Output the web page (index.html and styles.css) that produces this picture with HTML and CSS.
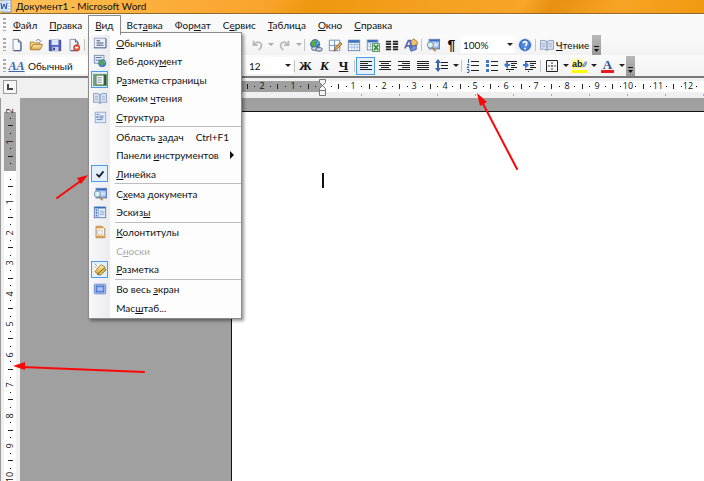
FILE: index.html
```html
<!DOCTYPE html>
<html lang="ru">
<head>
<meta charset="utf-8">
<title>Документ1 - Microsoft Word</title>
<link rel="stylesheet" href="styles.css">
</head>
<body>
<svg class="defs" aria-hidden="true">
  <defs>
    <linearGradient id="blue" x1="0" y1="0" x2="1" y2="1"><stop offset="0" stop-color="#e4efff"/><stop offset="1" stop-color="#7c9fe0"/></linearGradient>
    <linearGradient id="gold" x1="0" y1="0" x2="0" y2="1"><stop offset="0" stop-color="#fff0b0"/><stop offset="1" stop-color="#dda23c"/></linearGradient>
    <symbol id="page" viewBox="0 0 16 16"><path d="M3.500 1.500h6l3 3v10h-9z" fill="#f5f9ff" stroke="#7388aa"/><path d="M9.500 1.500v3h3M12.500 5v9.500h-8" fill="none" stroke="#33486f"/></symbol>
    <symbol id="doc" viewBox="0 0 16 16"><rect x="1.500" y="2.500" width="13" height="11" fill="#e9f0fb" stroke="#8d9dba"/><path d="M1 13.500h14V3" fill="none" stroke="#536b98"/><path d="M4 5.500h4M4 8h8M4 10.500h8" stroke="#36435f"/></symbol>
    <symbol id="mapdoc" viewBox="0 0 16 16"><rect x="3.500" y="1.500" width="12" height="11" fill="url(#blue)" stroke="#5777b5"/><path d="M4 3h11" stroke="#356ac0" stroke-width="2"/><path d="M9 7h5M9 9h5" stroke="#fff"/><circle cx="5" cy="8" r="3.500" fill="#d8f3fb" stroke="#698799"/><path d="M7 11l4 4" stroke="#ad8746" stroke-width="2"/></symbol>
    <symbol id="book" viewBox="0 0 16 16"><path d="M.500 3q4-1 7.500 1 3.500-2 7.500-1v10q-4-1-7.500 1-3.500-2-7.500-1z" fill="#dce6f4" stroke="#8496b4"/><path d="M8 4v10" stroke="#5b719a"/><path d="M2 6h4M2 8h4M2 10h4M10 6h4M10 8h4M10 10h4" stroke="#9fb1ce"/></symbol>
    <symbol id="globe" viewBox="0 0 16 16"><circle cx="8" cy="8" r="6" fill="#3f83d8" stroke="#345c90"/><path d="M4 4q4-3 6 0l-2 2 2 3-3 4q-4-3-4-8z" fill="#56ac48"/><path d="M10 3l3 4-2 1z" fill="#8ed272"/></symbol>
    <symbol id="grid" viewBox="0 0 16 16"><rect x="1.500" y="2.500" width="13" height="12" fill="#fff" stroke="#5c7eae"/><path d="M2 4h12" stroke="#3d70bc" stroke-width="3"/><path d="M2 7.500h12M2 10.500h12M5.500 5v9M8.500 5v9M11.500 5v9" stroke="#9db8dc"/></symbol>
    <symbol id="undo" viewBox="0 0 16 16"><path d="M4 3v5h5M5 7q4-4 7-1t-2 8" fill="none" stroke="#b5b8bd" stroke-width="2"/></symbol>
  </defs>
</svg>

<div class="window">
  <header class="titlebar">
    <svg class="logo" viewBox="0 0 12 13" aria-hidden="true"><path d="M2 0h9v12H2z" fill="#fff" stroke="#7191c3"/><path d="M5 3h5M5 6h5M5 9h5" stroke="#91a8d0"/><path d="M0 1h8v10H0z" fill="#d2e2fa"/><path d="M1 3l1 6 2-5 2 5 1-6" fill="none" stroke="#254c9c"/></svg>
    <span>Документ1 - Microsoft Word</span>
  </header>

  <nav class="menubar" aria-label="Меню">
    <span class="grip"></span>
    <button><u>Ф</u>айл</button>
    <button><u>П</u>равка</button>
    <div class="menu-holder">
      <button class="open" aria-expanded="true"><u>В</u>ид</button>
      <div class="dropdown" role="menu">
        <button role="menuitem"><i><svg><use href="#doc"/></svg></i><span><u>О</u>бычный</span></button>
        <button role="menuitem"><i><svg viewBox="0 0 16 16"><rect x="1.500" y="1.500" width="11" height="9" fill="#e9f0fb" stroke="#7188af"/><path d="M3 4h7M3 7h5" stroke="#43618f"/><use href="#globe" x="5" y="5" width="11" height="11"/></svg></i><span>Веб-доку<u>м</u>ент</span></button>
        <button role="menuitem"><i class="checked"><svg viewBox="0 0 16 16"><path d="M0 1h16v14H0z" fill="#71a777"/><path d="M12 2h3v12h-3z" fill="#2f4e35"/><path d="M3.500 2.500h9v11h-9z" fill="#fff" stroke="#55795a"/><path d="M5 5h5M5 7h5M5 9h5M5 11h5" stroke="#8695a8"/></svg></i><span>Р<u>а</u>зметка страницы</span></button>
        <button role="menuitem"><i><svg><use href="#book"/></svg></i><span>Режим <u>ч</u>тения</span></button>
        <button role="menuitem"><i><svg viewBox="0 0 16 16"><rect x="2.500" y="2.500" width="12" height="12" fill="#e3ecfc" stroke="#8ba3cd"/><path d="M4 5h3M7 7h5M7 9h5M4 11h7" stroke="#5978b1"/><path d="M4 7h2v2H4z" fill="#4b76c8"/></svg></i><span><u>С</u>труктура</span></button>
        <hr>
        <button role="menuitem"><i></i><span>Область <u>з</u>адач</span><kbd>Ctrl+F1</kbd></button>
        <button role="menuitem"><i></i><span>Панели <u>и</u>нструментов</span><b class="sub"></b></button>
        <button role="menuitem"><i class="checked"><svg viewBox="0 0 16 16"><path d="M4 8l3 3 5-6" fill="none" stroke="#111a2c" stroke-width="2"/></svg></i><span><u>Л</u>инейка</span></button>
        <hr>
        <button role="menuitem"><i><svg><use href="#mapdoc"/></svg></i><span>С<u>х</u>ема документа</span></button>
        <button role="menuitem"><i><svg viewBox="0 0 16 16"><rect x="1.500" y="2.500" width="13" height="12" fill="#edf3ff" stroke="#5777b5"/><path d="M2 3h12" stroke="#356ac0" stroke-width="2"/><path d="M3 6h2M3 9h2M3 12h2" stroke="#3c6ec5" stroke-width="2"/><path d="M6.500 4v10M8 7h5M8 9h5M8 11h5" stroke="#849fcb"/></svg></i><span>Эскиз<u>ы</u></span></button>
        <hr>
        <button role="menuitem"><i><svg viewBox="0 0 16 16"><path d="M3.500 1.500h7l3 3v10h-10z" fill="#fff8e8" stroke="#9c754a"/><path d="M4 3h7M4 13h9" stroke="#eba23c" stroke-width="2"/><path d="M5.500 6.500h5v4h-5z" fill="#fff" stroke="#b8c4d8"/></svg></i><span><u>К</u>олонтитулы</span></button>
        <button role="menuitem" disabled><i></i><span>С<u>н</u>оски</span></button>
        <button role="menuitem"><i class="checked"><svg viewBox="0 0 16 16"><path d="M1 3h7v10H1z" fill="#fffbe9"/><path d="M2 2l3 3M2 5l2 2" stroke="#8d8f96"/><path d="M2 11l7-8 5 3-8 8z" fill="url(#gold)" stroke="#9b7932"/><path d="M5 14l8-7 2 2-7 6z" fill="#e9c94e" stroke="#6a5623"/></svg></i><span><u>Р</u>азметка</span></button>
        <hr>
        <button role="menuitem"><i><svg viewBox="0 0 16 16"><rect x="1.500" y="2.500" width="13" height="11" rx="1" fill="#c8dcff" stroke="#5c7cc4"/><rect x="3.500" y="4.500" width="9" height="7" fill="#6f98ee" stroke="#3c62b8"/><path d="M5 7h6M5 9h6" stroke="#e1ecff"/></svg></i><span>Во весь <u>э</u>кран</span></button>
        <button role="menuitem"><i></i><span>Мас<u>ш</u>таб...</span></button>
      </div>
    </div>
    <button>Вст<u>а</u>вка</button>
    <button>Фор<u>м</u>ат</button>
    <button>С<u>е</u>рвис</button>
    <button><u>Т</u>аблица</button>
    <button><u>О</u>кно</button>
    <button><u>С</u>правка</button>
  </nav>

  <div class="toolbar" role="toolbar" aria-label="Стандартная">
    <div class="start">
      <span class="grip"></span>
      <button aria-label="Создать"><svg><use href="#page"/></svg></button>
      <button aria-label="Открыть"><svg viewBox="0 0 16 16"><path d="M1.500 13V4.500h4l1 1h6V8" fill="#f8d47b" stroke="#a17a35"/><path d="M1.500 13.500l3-6h11l-3 6z" fill="url(#gold)" stroke="#a17a35"/><path d="M8 3q4-3 5 1l1-1" fill="none" stroke="#64748f"/></svg></button>
      <button aria-label="Сохранить"><svg viewBox="0 0 16 16"><path d="M1.500 2.500h13v12h-13z" fill="#4e61c3" stroke="#333d92"/><path d="M4 2h8v6H4z" fill="#dce6fb"/><path d="M5 10h7v5H5z" fill="#cbd1e3"/><path d="M6 11h2v3H6z" fill="#293675"/></svg></button>
      <button aria-label="Разрешения"><svg viewBox="0 0 16 16"><use href="#page"/><circle cx="11" cy="11" r="4" fill="#d84d33"/><path d="M9 11h4" stroke="#fff" stroke-width="2"/></svg></button>
      <span class="sep"></span>
    </div>
    <button aria-label="Отменить"><svg><use href="#undo"/></svg></button>
    <button class="drop dim" aria-label="Список отмены"></button>
    <button aria-label="Вернуть"><svg class="flip"><use href="#undo"/></svg></button>
    <button class="drop dim" aria-label="Список возврата"></button>
    <span class="sep"></span>
    <button aria-label="Гиперссылка"><svg viewBox="0 0 16 16"><use href="#globe" x="0" y="0" width="14" height="14"/><rect x="3" y="10" width="7" height="4" rx="2" fill="#c9d5e5" stroke="#415873"/><rect x="8" y="11" width="7" height="4" rx="2" fill="#c9d5e5" stroke="#415873"/></svg></button>
    <button aria-label="Таблицы и границы"><svg viewBox="0 0 16 16"><path d="M1.500 2.500h12v12h-12zM7.500 3v11M2 8.500h11" fill="#f8fbff" stroke="#6785b9"/><path d="M7 15l1-4 6-6 2 2-6 6z" fill="#e4a74d" stroke="#805b2f"/></svg></button>
    <button aria-label="Добавить таблицу"><svg><use href="#grid"/></svg></button>
    <button aria-label="Таблица Excel"><svg viewBox="0 0 16 16"><use href="#grid" width="15" height="15"/><path d="M7.500 6.500h8v9h-8z" fill="#e9f6e7" stroke="#428442"/><path d="M9 8l5 6M14 8l-5 6" stroke="#2f8b35" stroke-width="2"/></svg></button>
    <button aria-label="Колонки"><svg viewBox="0 0 16 16"><path d="M1 4h6M1 7h6M1 10h6M1 13h6M9 4h6M9 7h6M9 10h6M9 13h6" stroke="#222" stroke-width="2"/></svg></button>
    <button aria-label="Рисование"><svg viewBox="0 0 16 16"><path d="M7 4l4-3 4 3v4l-4 3-4-3z" fill="#f2c56d" stroke="#9c742f"/><path d="M6 10l8-2v5l-6 2z" fill="#7d97df" stroke="#3c5096"/><path d="M1 12L5 3h2l2 9M3 9h5" fill="none" stroke="#5867b5" stroke-width="2"/></svg></button>
    <span class="sep"></span>
    <button aria-label="Схема документа"><svg><use href="#mapdoc"/></svg></button>
    <button class="pilcrow" aria-label="Непечатаемые знаки">¶</button>
    <label class="combo zoom"><select aria-label="Масштаб"><option>100%</option></select></label>
    <button aria-label="Справка"><svg viewBox="0 0 16 16"><circle cx="8" cy="8" r="7" fill="#4d86dc" stroke="#a7bce4"/><circle cx="8" cy="8" r="6" fill="none" stroke="#2c5db4"/><path d="M6 6q0-2 2-2t2 2-2 3M8 11v2" fill="none" stroke="#fff" stroke-width="2"/></svg></button>
    <span class="sep"></span>
    <button class="read"><svg><use href="#book"/></svg><span><u>Ч</u>тение</span></button>
    <button class="more" aria-label="Параметры панели"><svg viewBox="0 0 7 7"><path d="M1 1h5v1H1zM1 4h5L3.500 7z" fill="#111"/></svg></button>
  </div>

  <div class="toolbar" role="toolbar" aria-label="Форматирование">
    <div class="start">
      <span class="grip"></span>
      <button class="styles" aria-label="Стили">AA</button>
      <label class="combo style"><select aria-label="Стиль"><option>Обычный</option></select></label>
    </div>
    <label class="combo size"><select aria-label="Размер шрифта"><option>12</option></select></label>
    <span class="sep"></span>
    <button class="letter">Ж</button>
    <button class="letter italic">К</button>
    <button class="letter under">Ч</button>
    <span class="sep"></span>
    <button class="pressed" aria-label="По левому краю"><svg viewBox="0 0 14 14"><path d="M1 2.500h12M1 4.500h8M1 6.500h12M1 8.500h8M1 10.500h12" class="ink"/></svg></button>
    <button aria-label="По центру"><svg viewBox="0 0 14 14"><path d="M1 2.500h12M3 4.500h8M1 6.500h12M3 8.500h8M1 10.500h12" class="ink"/></svg></button>
    <button aria-label="По правому краю"><svg viewBox="0 0 14 14"><path d="M1 2.500h12M5 4.500h8M1 6.500h12M5 8.500h8M1 10.500h12" class="ink"/></svg></button>
    <button aria-label="По ширине"><svg viewBox="0 0 14 14"><path d="M1 2.500h12M1 4.500h12M1 6.500h12M1 8.500h12M1 10.500h12" class="ink"/></svg></button>
    <button aria-label="Интервал"><svg viewBox="0 0 14 14"><path d="M6 3.500h7M6 6.500h7M6 9.500h7" class="ink"/><path d="M3 0L6 4H0zM3 13L6 9H0zM2 4h2v5H2z" fill="#3565b5"/></svg></button>
    <button class="drop" aria-label="Выбор интервала"></button>
    <span class="sep"></span>
    <button aria-label="Нумерация"><svg viewBox="0 0 14 14"><path d="M5 2.500h8M5 6.500h8M5 11.500h8" class="ink"/><path d="M2.500 0v4M1 5.500h2v1L1 8.500h2M1 10.500h2v3H1" fill="none" stroke="#3565b5"/></svg></button>
    <button aria-label="Маркеры"><svg viewBox="0 0 14 14"><path d="M6 2.500h7M6 6.500h7M6 11.500h7" class="ink"/><path d="M1 1h3v3H1zM1 5h3v3H1zM1 10h3v3H1z" fill="#4474c6"/></svg></button>
    <button aria-label="Уменьшить отступ"><svg viewBox="0 0 14 14"><path d="M2 2.500h11M7 4.500h6M7 6.500h4M7 8.500h6M2 10.500h8M5 12.500h1" class="ink"/><path d="M0 6l4-4v3h2v2H4v3z" fill="#3f76cc"/></svg></button>
    <button aria-label="Увеличить отступ"><svg viewBox="0 0 14 14"><path d="M2 2.500h11M7 4.500h6M7 6.500h4M7 8.500h6M2 10.500h8M5 12.500h1" class="ink"/><path d="M6 6L2 2v3H0v2h2v3z" fill="#3f76cc"/></svg></button>
    <span class="sep"></span>
    <button aria-label="Границы"><svg viewBox="0 0 14 14"><path d="M1.500 1.500h11v11h-11z" fill="none" stroke="#222"/><path d="M7 3v8M3 7h8" stroke="#444" stroke-dasharray="2 1"/></svg></button>
    <button class="drop" aria-label="Выбор границы"></button>
    <button class="mark" aria-label="Выделение цветом"><span>ab</span><svg viewBox="0 0 16 16"><path d="M9 8l4-5 3 1-4 6-3 1z" fill="#9fb6da" stroke="#4c6186"/></svg></button>
    <button class="drop" aria-label="Цвет выделения"></button>
    <button class="color" aria-label="Цвет шрифта">A</button>
    <button class="drop" aria-label="Выбор цвета шрифта"></button>
    <button class="more" aria-label="Параметры панели"><svg viewBox="0 0 7 7"><path d="M1 1h5v1H1zM1 4h5L3.500 7z" fill="#111"/></svg></button>
  </div>

  <div class="hrule">
    <button class="tabstop" aria-label="Табуляция"><svg viewBox="0 0 12 12"><path d="M4 3v5h5" fill="none" stroke="#444" stroke-width="2"/></svg></button>
    <svg id="hruler" class="hruler" aria-hidden="true"></svg>
  </div>
  <div class="work">
    <svg id="vruler" class="vruler" aria-hidden="true"></svg>
    <main class="desk"><article class="sheet"><span class="caret"></span></article></main>
  </div>

  <svg class="arrows" aria-hidden="true">
    <g stroke="#fa0808" stroke-width="2" stroke-linecap="round"><path d="M517 169L481 100"/><path d="M57 198L82 180"/><path d="M144 372L22 367"/></g>
    <g fill="#fa0808"><path d="M477 93l10 9-7 4z"/><path d="M88 175l-7 9-4-6z"/><path d="M13 366l12-4v8z"/></g>
  </svg>
</div>
<script src="rulers.js"></script>
</body>
</html>
```
FILE: styles.css
```css
* { box-sizing: border-box; }
body { margin: 0; font: 10px/14px Lato, "Noto Sans", sans-serif; color: #111; background: #a0a0a0; }
button { font: inherit; color: inherit; background: none; border: 0; padding: 0; margin: 0; }
u { text-underline-offset: 1px; text-decoration-thickness: 1px; }
svg { display: block; }
.defs { position: absolute; width: 0; height: 0; }
.window { position: relative; display: flex; flex-direction: column; height: 100vh; overflow: hidden; }
.ink { stroke: #222; fill: none; }

.titlebar { display: flex; align-items: flex-start; gap: 4px; height: 14px; flex: none; line-height: 12px; border-bottom: 1px solid #8f6a2c; background: linear-gradient(115deg, #ffc15a 0, #fdb240 18%, #f9a32b 38%, #ee970f 44%, #f4a01f 60%, #f8a528 74%, #e8900f 78%, #f7a425 88%, #f0990f 100%); }
.titlebar .logo { width: 12px; height: 13px; }

.menubar { display: flex; align-items: center; height: 20px; flex: none; background: #f9f9f9; border-top: 1px solid #fff; }
.menubar > button, .open { padding: 0 6px; height: 19px; }
.grip { width: 3px; height: 13px; margin: 0 1px 0 3px; background: repeating-linear-gradient(#aaa 0 2px, transparent 2px 4px); flex: none; }
.menu-holder { position: relative; }
.open { position: relative; z-index: 3; background: #fdfdfd; border: 1px solid #8b8b8b; border-bottom: 0; height: 20px; }

.dropdown { position: absolute; z-index: 2; left: 0; top: 17px; width: 154px; height: 287px; padding: 1px 0; display: flex; flex-direction: column; justify-content: space-between; border: 1px solid #8b8b8b; background: linear-gradient(90deg, #f8f8fa 0, #ececee 21px, #fdfdfd 21px); box-shadow: 2px 2px 3px #0006; }
.dropdown button { display: flex; align-items: center; height: 18px; text-align: left; white-space: nowrap; }
.dropdown i { width: 17px; height: 17px; margin: 0 8px 0 2px; display: grid; place-items: center; flex: none; }
.dropdown i svg { width: 14px; height: 14px; }
.dropdown .checked { border: 1px solid #4a9be8; background: #e4effc; }
.dropdown :disabled { color: #a8a8a8; }
.dropdown hr { width: 126px; margin: 0 0 0 auto; border: 0; border-top: 1px solid #bdbdbd; }
.dropdown kbd { font: inherit; margin-left: 12px; }
.dropdown .sub { margin: 0 7px 0 auto; border: 4px solid transparent; border-left-color: #111; border-right: 0; }

.toolbar { display: flex; align-items: center; height: 21px; flex: none; background: linear-gradient(#fbfbfb, #f2f2f2); }
.toolbar .start { display: flex; align-items: center; width: 247px; flex: none; }
.toolbar button { width: 19px; height: 18px; flex: none; display: grid; place-items: center; }
.toolbar button svg { width: 14px; height: 14px; }
.toolbar .flip { transform: scaleX(-1); }
.toolbar .sep { width: 1px; height: 12px; margin: 0 1px; background: #c4c4c4; flex: none; }
.toolbar .drop { width: 9px; }
.drop::after, .combo::after { content: ""; border: 3px solid transparent; border-top-color: #222; border-bottom: 0; }
.drop.dim::after { border-top-color: #aaa; }
.combo { display: flex; align-items: center; height: 17px; background: #fff; padding-right: 2px; flex: none; }
.combo select { appearance: none; flex: 1; min-width: 0; border: 0; background: none; padding: 0 2px; font: inherit; color: inherit; }
.zoom { width: 54px; }
.size { width: 46px; }
.style { width: 160px; }
.toolbar .pilcrow { font: bold 14px/16px "Liberation Sans", sans-serif; }
.toolbar .read { width: auto; display: flex; gap: 2px; padding: 0 3px; }
.toolbar .more { width: 9px; height: 20px; background: linear-gradient(#b8b8b8, #979797); align-items: end; padding-bottom: 3px; }
.toolbar .more svg { width: 7px; height: 7px; }
.toolbar .styles { font: italic bold 12px/16px "Liberation Serif", serif; color: #3964ad; text-decoration: underline; }
.toolbar .letter { font: bold 13px/16px "Liberation Serif", serif; }
.toolbar .italic { font-style: italic; }
.toolbar .under { text-decoration: underline; }
.toolbar .pressed { border: 1px solid #4a9be8; background: #e4effc; }
.toolbar .mark { display: flex; align-items: flex-start; font: bold 9px/10px "Liberation Sans", sans-serif; border-bottom: 3px solid #ff0; width: 15px; height: 14px; margin: 0 2px; }
.mark span { background: #ffffa0; }
.toolbar .mark svg { width: 12px; height: 12px; margin-left: -6px; }
.toolbar .color { width: 13px; height: 14px; margin: 0 3px; font: bold 13px/11px "Liberation Serif", serif; color: #31548e; border-bottom: 3px solid #f01818; }

.hrule { display: flex; height: 22px; flex: none; background: #f0f0f0; border-top: 2px solid #777; }
.tabstop { width: 14px; height: 14px; margin: 2px 3px; border: 1px solid #999; background: #f7f7f7; flex: none; }
.hruler { flex: 1; height: 20px; min-width: 0; }
.work { display: flex; flex: 1; min-height: 0; }
.vruler { width: 20px; height: 100%; flex: none; background: #f0f0f0; border-left: 1px solid #999; }
.desk { flex: 1; padding: 13px 0 0 211px; display: flex; background: #a0a0a0; }
.sheet { flex: 1; background: #fff; border: solid #111; border-width: 1px 0 0 1px; padding: 61px 0 0 90px; }
.caret { display: block; width: 2px; height: 15px; background: #111; }
.num { font: 9px "Open Sans", "Noto Sans", sans-serif; fill: #111; text-anchor: middle; }
.arrows { position: absolute; z-index: 5; inset: 0; width: 100%; height: 100%; pointer-events: none; }
```
FILE: rulers.js
```js
// Draws both rulers: a number per centimetre, a bar per half, a dot per quarter.
const STEP = 30.45;
const NS = "http://www.w3.org/2000/svg";

function add(parent, name, attrs, text) {
  const el = document.createElementNS(NS, name);
  for (const key in attrs) el.setAttribute(key, attrs[key]);
  if (text !== undefined) el.textContent = text;
  parent.appendChild(el);
  return el;
}

// Marks run along x; dir is -1 where the scale is turned upright.
function scale(parent, zero, first, length, mid, dir) {
  for (let q = first; zero + (q * STEP) / 4 < length - 3; q++) {
    if (q === 0) continue;
    const x = dir * Math.round(zero + (q * STEP) / 4);
    if (q % 4 === 0) add(parent, "text", { x, y: mid + 3, class: "num" }, Math.abs(q / 4));
    else if (q % 2 === 0) add(parent, "rect", { x, y: mid - 2, width: 1, height: 5, fill: "#222" });
    else add(parent, "rect", { x, y: mid, width: 1, height: 1, fill: "#111" });
  }
}

function draw() {
  const h = document.getElementById("hruler");
  const width = h.getBoundingClientRect().width;
  h.replaceChildren();
  add(h, "rect", { x: 212, y: 3, width: 90, height: 11, fill: "#a0a0a0" });
  add(h, "rect", { x: 302, y: 3, width: "100%", height: 11, fill: "#fff" });
  scale(h, 303, -10, width, 8, 1);
  for (let x = 341; x < width; x += 38) add(h, "rect", { x, y: 16, width: 1, height: 2, fill: "#aaa" });
  add(h, "path", { d: "M299.5 1.5h6v3l-3 3 3 3v7h-6v-7l3-3-3-3zM299.5 12.5h6", fill: "#f4f4f4", stroke: "#777" });

  const v = document.getElementById("vruler");
  const height = v.getBoundingClientRect().height;
  v.replaceChildren();
  add(v, "rect", { x: 3, y: 14, width: 12, height: 59, fill: "#a0a0a0" });
  add(v, "rect", { x: 3, y: 73, width: 12, height: "100%", fill: "#fff" });
  scale(add(v, "g", { transform: "rotate(-90)" }), 74, -8, height, 9, -1);
}

draw();
addEventListener("resize", draw);
```
